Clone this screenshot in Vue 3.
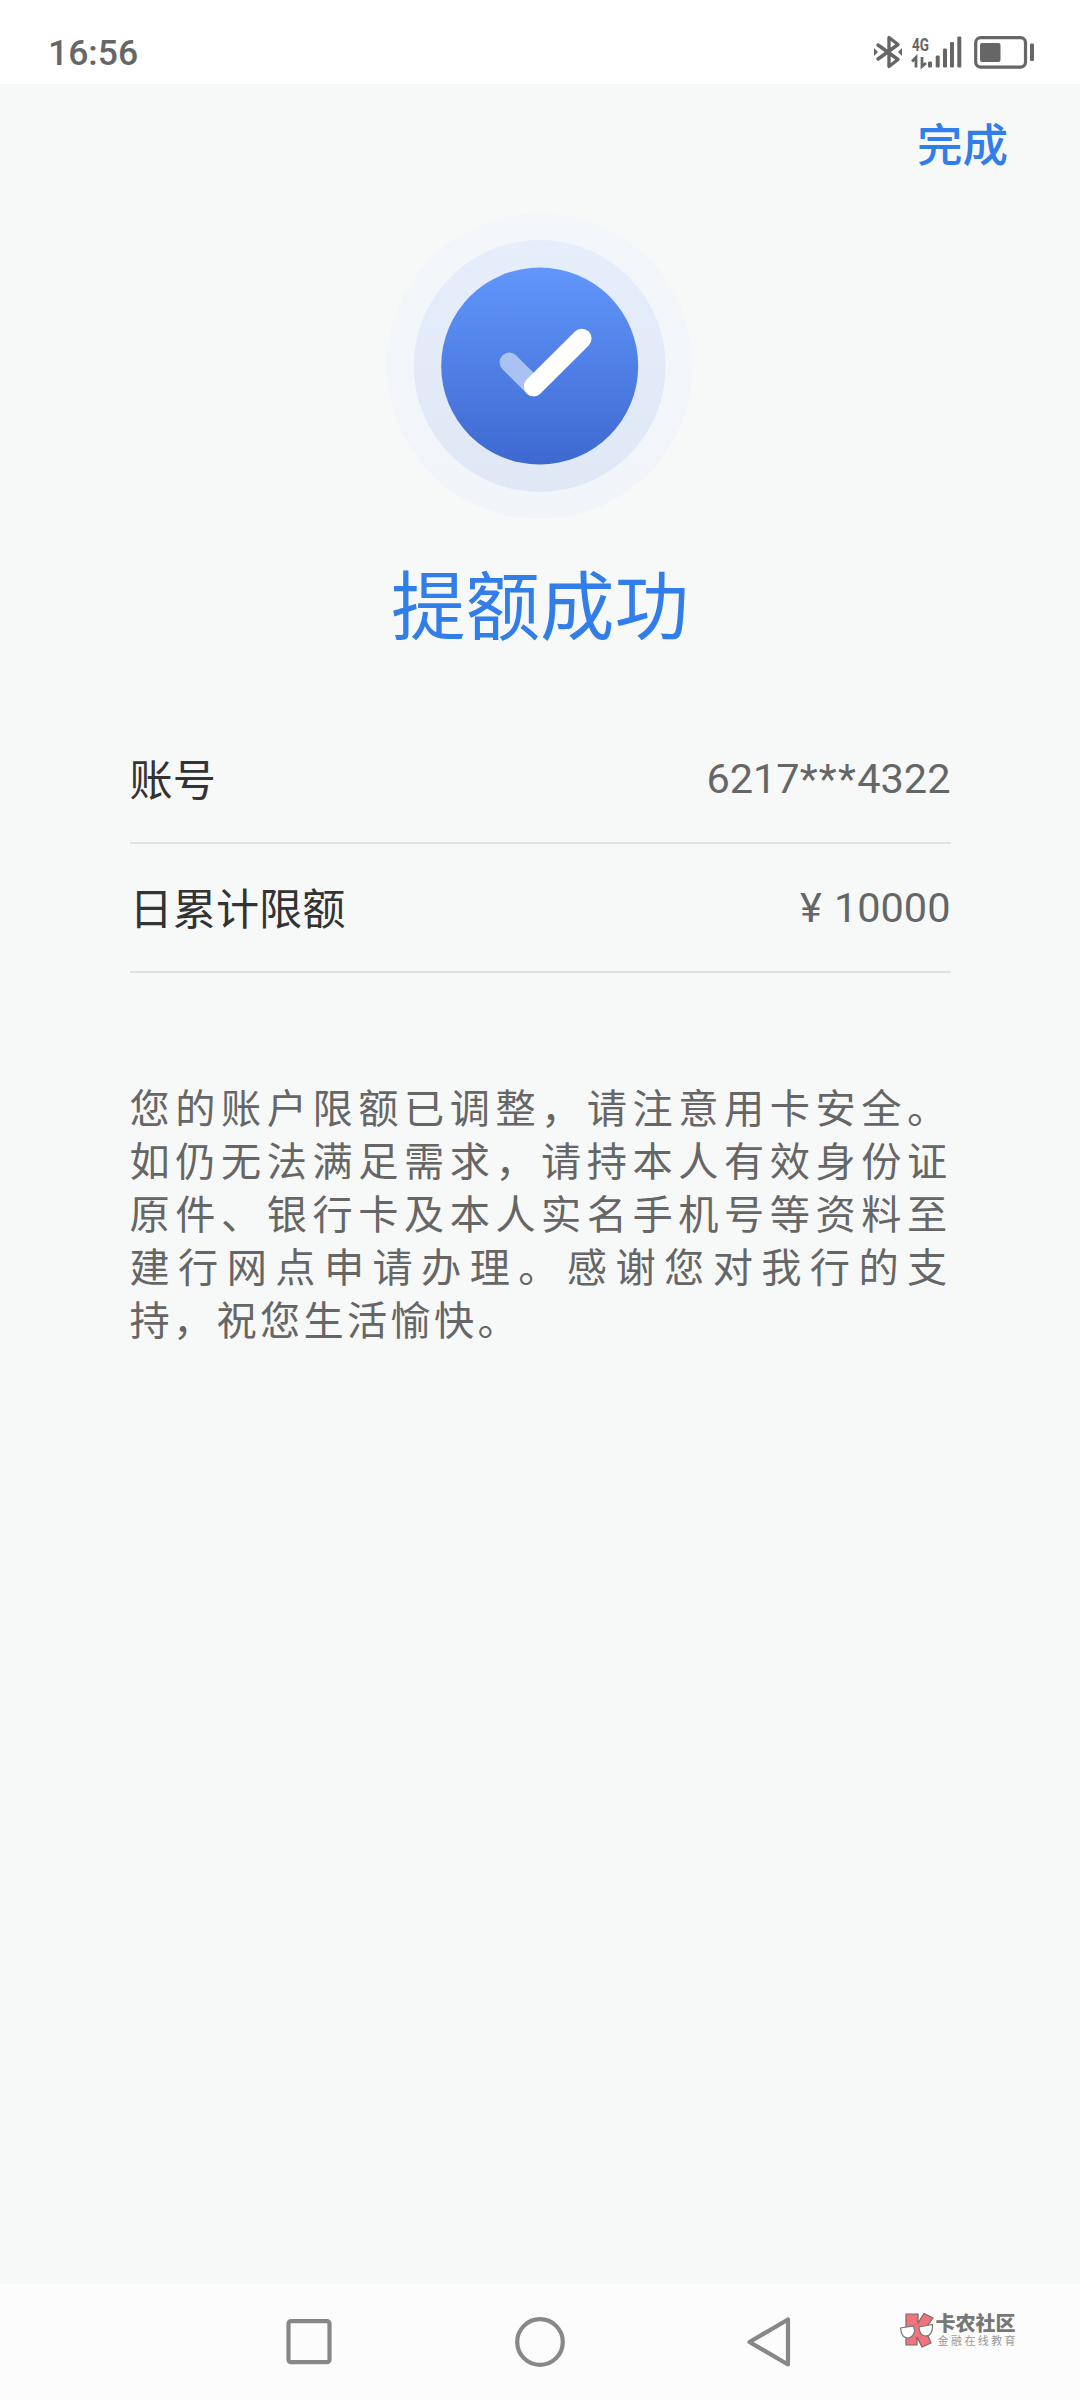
<template>
  <div class="page">
    <header class="status">
      <span class="time">16:56</span>
      <svg class="status-icons" viewBox="0 0 164 40" width="164" height="40">
        <!-- bluetooth -->
        <path d="M6 13 L26 27.5 L17 34.5 V5.5 L26 12.5 L6 27" class="line" />
        <path d="M2 16 L6 20 L2 24 Z M30 16 L26 20 L30 24 Z" class="solid" />
        <!-- network -->
        <text x="40" y="18.5" class="net" textLength="17" lengthAdjust="spacingAndGlyphs">4G</text>
        <path d="M44 35.5 V25.5 L40 29.5 M50 25 V34.5 L54 31" class="arrows" />
        <rect
          v-for="bar in bars"
          :key="bar.x"
          :x="bar.x"
          :y="35.5 - bar.h"
          width="4"
          :height="bar.h"
          rx="1.3"
          class="solid"
        />
        <!-- battery -->
        <rect x="103.7" y="5.6" width="49.8" height="29.5" rx="5" class="battery" />
        <rect x="108" y="11" width="20.5" height="19" rx="2" class="solid" />
        <rect x="158" y="11.5" width="4" height="17.5" rx="1.2" class="solid" />
      </svg>
    </header>

    <main>
      <div class="toolbar">
        <a class="done">完成</a>
      </div>
      <svg class="success" viewBox="0 0 310 310" width="310" height="310">
        <defs>
          <linearGradient id="disc" x1="0" y1="0" x2="0" y2="1">
            <stop offset="0" stop-color="#6296fb" />
            <stop offset="1" stop-color="#3d69d0" />
          </linearGradient>
          <linearGradient id="ring" x1="0" y1="0" x2="0" y2="1">
            <stop offset="0" stop-color="#e5eefa" />
            <stop offset="1" stop-color="#e0e7f5" />
          </linearGradient>
          <linearGradient id="halo" x1="0" y1="0" x2="0" y2="1">
            <stop offset="0" stop-color="#f4f7fa" />
            <stop offset="1" stop-color="#f1f4f9" />
          </linearGradient>
        </defs>
        <circle cx="154.7" cy="155" r="153" fill="url(#halo)" />
        <circle cx="154.7" cy="155" r="126" fill="url(#ring)" />
        <circle cx="154.7" cy="155" r="98.5" fill="url(#disc)" />
        <path d="M124.3 151.3 L148.6 175.5" class="check-short" />
        <path d="M196.8 127.5 L148.6 175.5" class="check-long" />
      </svg>
      <h1>提额成功</h1>

      <ul class="details">
        <li v-for="row in rows" :key="row.label">
          <span class="label">{{ row.label }}</span>
          <span class="value">
            <span v-for="part in row.parts" :key="part.text" :class="part.type">{{ part.text }}</span>
          </span>
        </li>
      </ul>

      <p class="notice">{{ notice }}</p>
    </main>

    <footer class="nav">
      <svg class="nav-icon" viewBox="0 0 54 54" width="54" height="54">
        <rect x="6.5" y="6.2" width="41" height="41" rx="2.5" />
      </svg>
      <svg class="nav-icon" viewBox="0 0 54 54" width="54" height="54">
        <circle cx="27" cy="27" r="22.8" />
      </svg>
      <svg class="nav-icon" viewBox="0 0 54 54" width="54" height="54">
        <path d="M44 4.5 V49.5 L5.5 27 Z" />
      </svg>
      <div class="brand">
        <svg class="brand-logo" viewBox="0 0 36 36" width="36" height="36">
          <path d="M7 2 H19 V11 L25 1.5 L34 6 L26 17 L32 31 L23 35 L18 25 V33 H7 Z" class="brand-k" />
          <path d="M1.5 16 L14.5 14 C17.5 21 13 26 8.5 26 C4 26 2 21 1.5 16 Z" class="lens" />
          <path d="M20 15 L33.5 12.5 C34 20 31 24 26.5 24 C22.5 24 20 20 20 15 Z" class="lens" />
        </svg>
        <div class="brand-text">
          <b>卡农社区</b>
          <small>金融在线教育</small>
        </div>
      </div>
    </footer>
  </div>
</template>

<script setup>
import { ref } from 'vue';

const bars = [
  { x: 56, h: 6 },
  { x: 63.7, h: 12 },
  { x: 71, h: 19 },
  { x: 78, h: 25.5 },
  { x: 85.3, h: 31 },
];

const rows = ref([
  {
    label: '账号',
    parts: [
      { type: 'digits', text: '6217' },
      { type: 'stars', text: '***' },
      { type: 'digits', text: '4322' },
    ],
  },
  {
    label: '日累计限额',
    parts: [
      { type: 'yen', text: '¥' },
      { type: 'digits', text: '10000' },
    ],
  },
]);

const notice = ref(
  '您的账户限额已调整，请注意用卡安全。如仍无法满足需求，请持本人有效身份证原件、银行卡及本人实名手机号等资料至建行网点申请办理。感谢您对我行的支持，祝您生活愉快。'
);
</script>

<style>
body {
  margin: 0;
  background-color: #f7f9f8;
}
</style>

<style scoped>
.page {
  display: flex;
  flex-direction: column;
  width: 1080px;
  height: 2400px;
  background-color: #f7f9f8;
  font-family: Roboto, 'Noto Sans CJK SC', sans-serif;
}

.status {
  display: flex;
  justify-content: space-between;
  box-sizing: border-box;
  height: 84px;
  padding: 32px 44px 0 48px;
  background-color: #fff;
}

.time {
  font-size: 35.5px;
  font-weight: 500;
  line-height: 42px;
  color: #666;
}

.solid {
  fill: #666;
}

.line {
  fill: none;
  stroke: #666;
  stroke-width: 3.4;
  stroke-linejoin: round;
  stroke-linecap: round;
}

.arrows {
  fill: none;
  stroke: #666;
  stroke-width: 2.8;
}

.net {
  font-size: 18px;
  font-weight: 700;
  fill: #666;
}

.battery {
  fill: none;
  stroke: #666;
  stroke-width: 3.2;
}

main {
  flex: 1;
  display: flex;
  flex-direction: column;
  align-items: center;
}

.toolbar {
  display: flex;
  justify-content: flex-end;
  align-self: stretch;
  padding: 31px 72px 0 0;
}

.done {
  font-size: 45.5px;
  font-weight: 500;
  line-height: 64px;
  color: #317de9;
}

.success {
  margin-top: 32px;
}

.check-short,
.check-long {
  fill: none;
  stroke: #fff;
  stroke-width: 19.5;
  stroke-linecap: round;
}

.check-short {
  stroke: #a9c1f3;
}

h1 {
  margin: 34px 0 0;
  font-size: 74.5px;
  font-weight: 400;
  line-height: 108px;
  color: #317de9;
}

.details {
  width: 821px;
  margin: 52px 0 0;
  padding: 0;
  list-style: none;
}

.details li {
  display: flex;
  justify-content: space-between;
  align-items: center;
  box-sizing: border-box;
  height: 129px;
  border-bottom: 2px solid #dfe2e1;
}

.label {
  padding-bottom: 4px;
  font-size: 43.2px;
  color: #333;
}

.value {
  display: flex;
  font-size: 41.5px;
  color: #666;
}

.notice {
  width: 821px;
  margin: 110px 0 0;
  font-size: 40.2px;
  line-height: 53.1px;
  letter-spacing: 3.3px;
  text-align: justify;
  color: #666;
}

.stars {
  letter-spacing: 1.3px;
}

.yen {
  margin-right: 12px;
}

.nav {
  display: flex;
  align-items: center;
  box-sizing: border-box;
  height: 116px;
  padding: 0 62px 0 282px;
  background-color: #fcfcfc;
}

.nav-icon {
  margin-right: 177px;
  fill: none;
  stroke: #878787;
  stroke-width: 4.2;
  stroke-linejoin: round;
}

.nav-icon:nth-of-type(3) {
  margin-right: 0;
}

.brand {
  display: flex;
  margin: -24px 0 0 auto;
}

.brand-logo {
  margin-right: 1px;
}

.brand-k {
  fill: #f0747e;
  stroke: #7d6668;
  stroke-width: 1.2;
}

.lens {
  fill: #fff;
  stroke: #777;
  stroke-width: 1.2;
}

.brand-text {
  display: flex;
  flex-direction: column;
  white-space: nowrap;
}

.brand-text b {
  font-size: 20px;
  font-weight: 900;
  line-height: 24px;
  color: #777;
}

.brand-text small {
  padding-left: 2px;
  font-size: 11px;
  line-height: 12px;
  letter-spacing: 2.4px;
  color: #999;
}
</style>
